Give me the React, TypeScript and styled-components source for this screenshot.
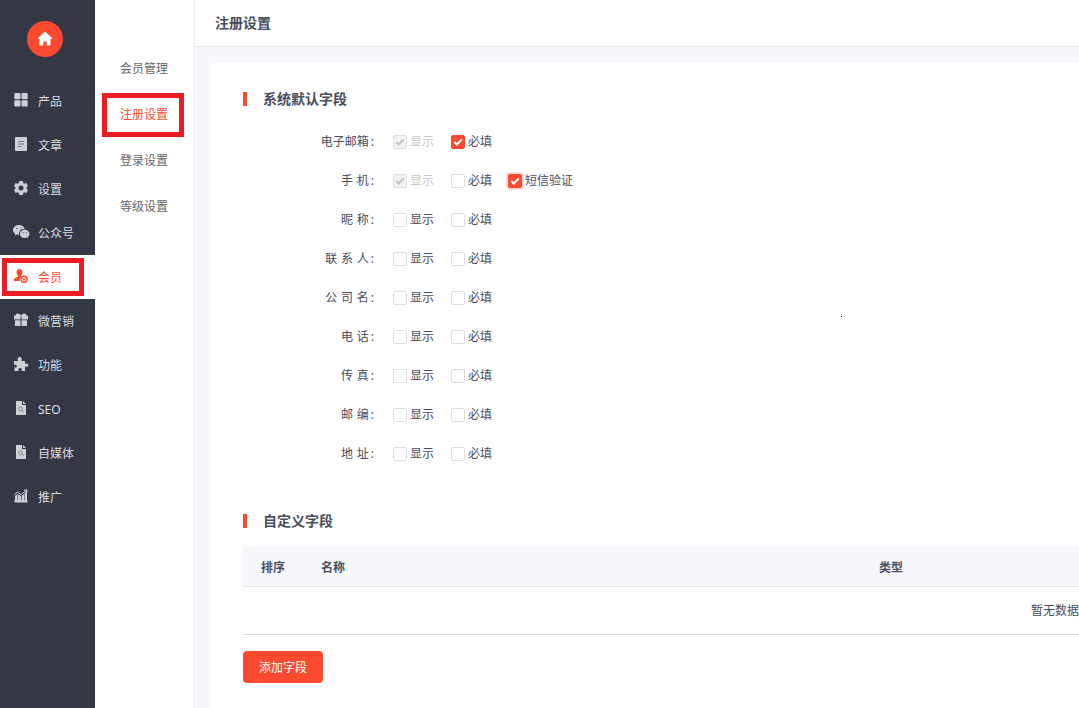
import React from 'react';
import styled, { createGlobalStyle } from 'styled-components';

const Global = createGlobalStyle`
  * { box-sizing: border-box; }
  html, body { margin: 0; height: 100%; overflow: hidden; }
  body {
    font: 12px/20px "Noto Sans", "Noto Sans CJK SC", sans-serif;
    color: #474d5c;
    background: #fff;
  }
`;

const Page = styled.div`
  display: flex;
  width: 100%;
  height: 708px;
  overflow: hidden;
`;

const Nav = styled.nav`
  flex: 0 0 95px;
  background: #343744;
`;

const Home = styled.div`
  display: flex;
  align-items: center;
  justify-content: center;
  width: 36px;
  height: 36px;
  margin: 21px 0 22px 27px;
  border-radius: 50%;
  background: #fc4a30;
  color: #fff;
`;

const NavItem = styled.a<{ $active?: boolean }>`
  position: relative;
  display: flex;
  align-items: center;
  height: 44px;
  padding: 2px 0 0 13px;
  gap: 9px;
  white-space: nowrap;
  color: ${p => (p.$active ? '#fc4a30' : '#dcdee3')};
  background: ${p => (p.$active ? '#fff' : 'transparent')};
  svg { flex: none; margin-top: -4px; color: ${p => (p.$active ? '#fc4a30' : '#ced0d6')}; }
`;

const Marker = styled.i<{ $l: number; $t: number; $h: number }>`
  position: absolute;
  left: ${p => p.$l}px;
  top: ${p => p.$t}px;
  width: 82px;
  height: ${p => p.$h}px;
  border: 5px solid #ed1c24;
`;

const SubNav = styled.nav`
  flex: 0 0 100px;
  padding-top: 45px;
  border-right: 1px solid #e9ebf0;
  background: #fff;
`;

const SubItem = styled.a<{ $active?: boolean }>`
  position: relative;
  display: flex;
  align-items: center;
  height: 46px;
  padding: 2px 0 0 25px;
  color: ${p => (p.$active ? '#fc4a30' : '#666')};
`;

const Main = styled.main`
  flex: 1;
  min-width: 0;
  display: flex;
  flex-direction: column;
  background: #f6f8fc;
`;

const Header = styled.header`
  flex: 0 0 47px;
  padding: 13px 20px;
  border-bottom: 1px solid #e9ebef;
  background: #fff;
  font-size: 14px;
  font-weight: 700;
`;

const Card = styled.section`
  position: relative;
  flex: 1;
  margin: 16px 0 0 16px;
  padding: 26px 0 0 32px;
  overflow: hidden;
  background: #fff;
`;

const Title = styled.h2`
  display: flex;
  align-items: center;
  gap: 16px;
  height: 20px;
  margin: 0;
  font-size: 14px;
  font-weight: 700;
  &::before { content: ''; width: 4px; height: 14px; background: #fc4a30; }
`;

const Fields = styled.div`
  padding: 13px 0 38px;
`;

const Field = styled.div`
  display: flex;
  align-items: center;
  height: 39px;
`;

const FieldName = styled.span`
  width: 131px;
  margin-right: 19px;
  text-align: right;
  word-spacing: .6px;
  &::after { content: ':'; margin-left: 2px; }
`;

const Option = styled.label<{ $disabled?: boolean }>`
  display: flex;
  align-items: center;
  gap: 3px;
  width: 58px;
  white-space: nowrap;
  color: ${p => (p.$disabled ? '#c5c8ce' : 'inherit')};
  &:nth-of-type(3) { margin-left: -1px; }
`;

const Box = styled.span<{ $kind: Kind }>`
  flex: none;
  display: flex;
  align-items: center;
  justify-content: center;
  width: 14px;
  height: 14px;
  border-radius: 2px;
  border: 1px solid ${p => (p.$kind === 'on' || p.$kind === 'focus' ? '#fc4a30' : '#dcdee2')};
  background: ${p => (p.$kind === 'off' ? '#fff' : p.$kind === 'locked' ? '#f3f3f3' : '#fc4a30')};
  color: ${p => (p.$kind === 'locked' ? '#c3c3c3' : '#fff')};
  box-shadow: ${p => (p.$kind === 'focus' ? '0 0 0 2px rgba(252, 74, 48, .2)' : 'none')};
`;

const Table = styled.div`
  width: 1624px;
  margin-top: 16px;
`;

const TableHead = styled.div`
  display: grid;
  grid-template-columns: 60px 558px 1fr;
  align-items: center;
  height: 40px;
  padding: 2px 0 0 18px;
  border-bottom: 1px solid #e3e6ea;
  background: #f6f8fc;
  font-weight: 700;
`;

const Empty = styled.div`
  height: 48px;
  line-height: 47px;
  text-align: center;
  border-bottom: 1px solid #dcdee2;
`;

const Button = styled.button`
  width: 80px;
  height: 32px;
  margin-top: 16px;
  padding: 1px 0 0;
  border: 0;
  border-radius: 4px;
  background: #fc4a30;
  color: #fff;
  font: inherit;
`;

const Dot = styled.i`
  position: absolute;
  left: 630px;
  top: 253px;
  width: 1px;
  height: 1px;
  background: #000;
`;

type Kind = 'off' | 'on' | 'focus' | 'locked';

const filePath = (
  <>
    <path fill="currentColor" d="M3 1h6v4h4v10H3z" />
    <path fill="currentColor" d="M10 1l3 3h-3z" />
    <circle cx="7.6" cy="8.8" r="1.9" fill="none" stroke="#858994" />
    <path d="M9 10.2l1.8 1.8" stroke="#858994" />
  </>
);

const glyphs: Record<string, React.ReactNode> = {
  grid: (
    <g fill="currentColor">
      <rect x="1.3" y="1" width="6.2" height="6.2" rx="1" />
      <rect x="8.5" y="1" width="6.2" height="6.2" rx="1" />
      <rect x="1.3" y="8.2" width="6.2" height="6.2" rx="1" />
      <rect x="8.5" y="8.2" width="6.2" height="6.2" rx="1" />
    </g>
  ),
  article: (
    <>
      <rect x="2" y="1" width="12" height="14" rx="1" fill="currentColor" />
      <path d="M5 5.5h6M5 8h6M5 10.5h3.5" stroke="#737783" />
    </>
  ),
  gear: (
    <path
      fill="currentColor"
      fillRule="evenodd"
      d="M6.3 1h3.4l.5 2 1.2.7 2-.6L15 6l-1.500 1.400v1.300L15 10l-1.600 2.900-2-.6-1.200.7-.5 2H6.300l-.5-2-1.200-.7-2 .6L1 10l1.500-1.300V7.400L1 6l1.600-2.900 2 .6L5.800 3zM8 5.500a2.500 2.500 0 1 0 0 5 2.500 2.500 0 0 0 0-5z"
    />
  ),
  wechat: (
    <>
      <path fill="currentColor" d="M6 1C2.700 1 0 3.200 0 6c0 1.600.9 2.900 2.200 3.800L1.700 11.600l2.100-1.100c.8.200 1.500.3 2.300.3A4.800 4.800 0 0 1 6 9.700C6 7 8.500 5 11.500 5h.3C11.300 2.700 8.900 1 6 1z" />
      <path fill="currentColor" d="M16.500 9.900c0-2.300-2.200-4.100-4.800-4.100S6.900 7.600 6.900 9.900s2.200 4 4.800 4c.6 0 1.200-.1 1.700-.3l1.700.9-.4-1.500c1.100-.8 1.800-1.800 1.800-3.100z" />
      <g fill="#666a76">
        <circle cx="4" cy="4.500" r=".8" />
        <circle cx="8" cy="4.500" r=".8" />
        <circle cx="10.200" cy="8.700" r=".65" />
        <circle cx="13.200" cy="8.700" r=".65" />
      </g>
    </>
  ),
  member: (
    <>
      <path fill="currentColor" d="M6.500 1C4.600 1 3.500 2.300 3.500 4.200c0 1.500.6 2.700 1.500 3.500v1L2 10c-.9.500-1.200 1.300-1.200 3h6.100a4 4 0 0 1 1.300-4.300v-1C9 6.900 9.500 5.600 9.500 4.200 9.500 2.300 8.400 1 6.500 1z" />
      <circle cx="11" cy="11.200" r="3" fill="#fff" stroke="currentColor" strokeWidth="1.400" />
      <path d="M9.600 10.200L11 12.300l1.500-2.100" fill="none" stroke="currentColor" strokeWidth="1.200" />
    </>
  ),
  gift: (
    <g fill="currentColor">
      <path d="M1 7.500v-4h1.800C2.500 2 3.700 1.200 5 1.500c1.200.2 2.200.9 3 1.900.8-1 1.800-1.700 3-1.900 1.300-.3 2.500.5 2.200 2H15v4H8.500v-3h-1v3z" />
      <path d="M2 8.200h5.500V14H2zM8.500 8.200H14V14H8.500z" />
    </g>
  ),
  puzzle: (
    <path fill="currentColor" d="M1 5h4.200C3.900 2.900 5 1 6.700 1s2.800 1.900 1.600 4H12v3c1.500-1.200 3.300-.5 3.300 1.100S13.500 11.500 12 10.300V15H8.600c.8-1.800 0-2.900-1.400-2.900S5 13.200 5.700 15H1.500v-3.700c1.500.7 2.400.1 2.400-1.200C3.900 8.800 2.700 8.300 1 8.900z" />
  ),
  file: filePath,
  chart: (
    <>
      <path fill="currentColor" d="M2 8l2.500-2v8H2zM5.100 6L8 8v6H5.100zM8.600 8l2.400-2v8H8.600zM11.500 5L14 3v11h-2.500zM1.500 12.500h13v2h-13z" />
      <path d="M1.500 6.500l3-2.500 3.600 2.500L13.500 2M11 2h3v2.500" fill="none" stroke="currentColor" />
    </>
  ),
};

const navItems = [
  ['grid', '产品'],
  ['article', '文章'],
  ['gear', '设置'],
  ['wechat', '公众号'],
  ['member', '会员'],
  ['gift', '微营销'],
  ['puzzle', '功能'],
  ['file', 'SEO'],
  ['file', '自媒体'],
  ['chart', '推广'],
];

const fields: [string, Kind, Kind][] = [
  ['电子邮箱', 'locked', 'on'],
  ['手 机', 'locked', 'off'],
  ['昵 称', 'off', 'off'],
  ['联 系 人', 'off', 'off'],
  ['公 司 名', 'off', 'off'],
  ['电 话', 'off', 'off'],
  ['传 真', 'off', 'off'],
  ['邮 编', 'off', 'off'],
  ['地 址', 'off', 'off'],
];

function Check({ kind, children }: { kind: Kind; children: React.ReactNode }) {
  return (
    <Option $disabled={kind === 'locked'}>
      <Box $kind={kind}>
        {kind !== 'off' && (
          <svg width="12" height="12" viewBox="0 0 12 12">
            <path d="M2.300 6l2.500 2.500 5-5" fill="none" stroke="currentColor" strokeWidth="2" />
          </svg>
        )}
      </Box>
      {children}
    </Option>
  );
}

export default function App() {
  return (
    <>
      <Global />
      <Page>
        <Nav>
          <Home>
            <svg width="16" height="16" viewBox="0 0 16 16">
              <path fill="currentColor" d="M7.200 1.300a1.200 1.200 0 0 1 1.600 0l6 5.500c.6.600.3 1.300-.5 1.300h-.8v5.400c0 .7-.4 1.100-1 1.100H9.700v-4H6.300v4H3.500c-.6 0-1-.4-1-1.100V8.100h-.8c-.8 0-1.100-.7-.5-1.300z" />
            </svg>
          </Home>
          {navItems.map(([icon, name]) => (
            <NavItem key={name} $active={name === '会员'}>
              <svg width="16" height="16" viewBox="0 0 16 16" overflow="visible">{glyphs[icon]}</svg>
              {name}
              {name === '会员' && <Marker $l={2} $t={3} $h={38} />}
            </NavItem>
          ))}
        </Nav>
        <SubNav>
          {['会员管理', '注册设置', '登录设置', '等级设置'].map(name => (
            <SubItem key={name} $active={name === '注册设置'}>
              {name}
              {name === '注册设置' && <Marker $l={7} $t={2} $h={44} />}
            </SubItem>
          ))}
        </SubNav>
        <Main>
          <Header>注册设置</Header>
          <Card>
            <Title>系统默认字段</Title>
            <Fields>
              {fields.map(([name, show, need]) => (
                <Field key={name}>
                  <FieldName>{name}</FieldName>
                  <Check kind={show}>显示</Check>
                  <Check kind={need}>必填</Check>
                  {name === '手 机' && <Check kind="focus">短信验证</Check>}
                </Field>
              ))}
            </Fields>
            <Title>自定义字段</Title>
            <Table>
              <TableHead>
                <span>排序</span>
                <span>名称</span>
                <span>类型</span>
              </TableHead>
              <Empty>暂无数据</Empty>
            </Table>
            <Button>添加字段</Button>
            <Dot />
          </Card>
        </Main>
      </Page>
    </>
  );
}
